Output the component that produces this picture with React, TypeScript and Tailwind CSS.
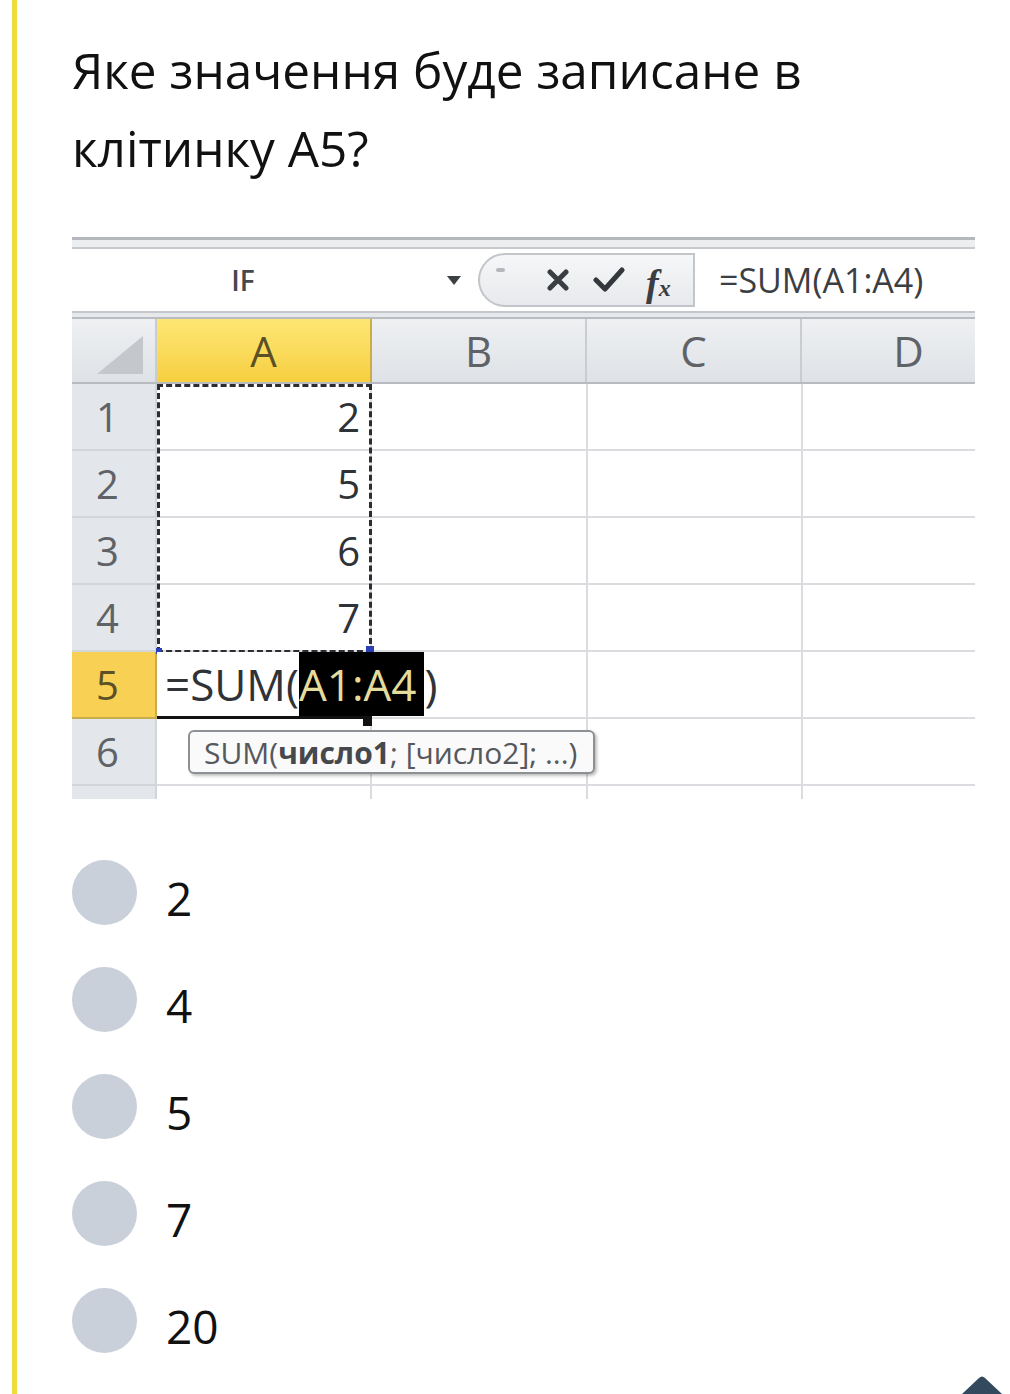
import type { ReactNode } from "react";

const answers = ["2", "4", "5", "7", "20"];

const rows: { n: string; value?: string }[] = [
  { n: "1", value: "2" },
  { n: "2", value: "5" },
  { n: "3", value: "6" },
  { n: "4", value: "7" },
  { n: "5" },
  { n: "6" }
];

function HeaderCell({ active, children }: { active?: boolean; children: ReactNode }) {
  return (
    <div
      className={
        active
          ? "flex h-full w-[215px] shrink-0 items-center justify-center border-r-2 border-[#c9ad4c] bg-gradient-to-b from-[#fde773] to-[#f7cf3f] text-[42px] text-[#5b5126]"
          : "flex h-full w-[215px] shrink-0 items-center justify-center border-r-2 border-[#c9ccd0] bg-gradient-to-b from-[#eef0f2] to-[#dfe2e6] text-[42px] text-[#5f6266]"
      }
    >
      {children}
    </div>
  );
}

function Sheet() {
  return (
    <div className="relative mt-[50px] h-[562px] w-[903px] overflow-hidden font-['Open_Sans',sans-serif]">
      {/* ribbon edge */}
      <div className="h-[12px] border-t-[3px] border-b-[2px] border-t-[#b4b7bb] border-b-[#c6c9cd] bg-[#eceef0]" />

      {/* formula bar */}
      <div className="flex h-[62px] items-center bg-white">
        <div className="flex h-full w-[406px] shrink-0 items-center">
          <span className="w-[342px] text-center text-[28px] font-semibold text-[#45484c]">IF</span>
          <svg className="ml-[33px]" width="14" height="9" viewBox="0 0 14 9">
            <path d="M0 0 H14 L7 9 Z" fill="#3c3f43" />
          </svg>
        </div>
        <div className="relative flex h-[54px] w-[217px] shrink-0 items-center rounded-l-[27px] border-y-2 border-l-2 border-r-2 border-[#c2c5c9] bg-gradient-to-b from-[#f6f7f8] to-[#e7e9ec]">
          <span className="absolute left-[16px] top-[13px] h-[4px] w-[9px] rounded-full bg-[#b5b8bc]" />
          <svg className="absolute left-[66px]" width="24" height="22" viewBox="0 0 24 22">
            <path d="M4 3 L20 19 M20 3 L4 19" stroke="#3a3d41" strokeWidth="5" strokeLinecap="round" />
          </svg>
          <svg className="absolute left-[113px]" width="32" height="26" viewBox="0 0 32 26">
            <path d="M3 13 L12 22 L29 3" stroke="#34373b" strokeWidth="5" fill="none" strokeLinecap="round" strokeLinejoin="round" />
          </svg>
          <span className="absolute left-[166px] top-[0px] font-['Liberation_Serif',serif] text-[38px] font-bold italic text-[#3a3d41]">
            f<span className="text-[24px]">x</span>
          </span>
        </div>
        <span className="pl-[24px] text-[34px] text-[#3b3e42]">=SUM(A1:A4)</span>
      </div>

      <div className="h-[8px] border-t-2 border-b-2 border-t-[#c3c6ca] border-b-[#b9bcc0] bg-[#e6e8eb]" />

      {/* column headers */}
      <div className="flex h-[65px] border-b-2 border-[#b8bbbf]">
        <div className="relative flex h-full w-[85px] shrink-0 items-end justify-end border-r-2 border-[#c9ccd0] bg-gradient-to-b from-[#eef0f2] to-[#dfe2e6] pb-[8px] pr-[12px]">
          <svg width="46" height="38" viewBox="0 0 46 38">
            <path d="M46 0 V38 H0 Z" fill="#c4c7cb" />
          </svg>
        </div>
        <HeaderCell active>A</HeaderCell>
        <HeaderCell>B</HeaderCell>
        <HeaderCell>C</HeaderCell>
        <HeaderCell>D</HeaderCell>
      </div>

      {/* rows */}
      {rows.map((row) => (
        <div key={row.n} className="flex h-[67px]">
          <div
            className={
              row.n === "5"
                ? "flex w-[85px] shrink-0 items-center border-r-2 border-b-2 border-[#c9ad4c] bg-[#f8d053] pl-[24px] text-[40px] text-[#5b5126]"
                : "flex w-[85px] shrink-0 items-center border-r-2 border-b-2 border-[#d2d5d9] bg-[#e3e6ea] pl-[24px] text-[40px] text-[#5f6266]"
            }
          >
            {row.n}
          </div>
          {row.n === "5" ? (
            <div className="relative z-10 flex w-[215px] shrink-0 items-center overflow-visible border-b-[3px] border-[#111] bg-white pl-[8px] text-[44px] whitespace-nowrap text-[#2f3236]">
              =SUM(
              <span className="flex h-[64px] items-center bg-black pr-[8px] text-[#e4dc9c]">A1:A4</span>)
            </div>
          ) : (
            <div className="flex w-[215px] shrink-0 items-center justify-end border-r-2 border-b-2 border-[#dadcdf] pr-[10px] text-[40px] text-[#2f3236]">
              {row.value}
            </div>
          )}
          <div className="w-[216px] shrink-0 border-r-2 border-b-2 border-[#dadcdf]" />
          <div className="w-[215px] shrink-0 border-r-2 border-b-2 border-[#dadcdf]" />
          <div className="w-[215px] shrink-0 border-b-2 border-[#dadcdf]" />
        </div>
      ))}
      <div className="flex h-[20px]">
        <div className="w-[85px] shrink-0 border-r-2 border-[#d2d5d9] bg-[#e3e6ea]" />
        <div className="w-[215px] shrink-0 border-r-2 border-[#dadcdf]" />
        <div className="w-[216px] shrink-0 border-r-2 border-[#dadcdf]" />
        <div className="w-[215px] shrink-0 border-r-2 border-[#dadcdf]" />
      </div>

      {/* copy range marquee */}
      <div className="absolute left-[85px] top-[147px] h-[269px] w-[215px] border-[3px] border-dashed border-[#2b2d30]" />
      <span className="absolute left-[84px] top-[411px] h-[6px] w-[6px] bg-[#2941b5]" />
      <span className="absolute left-[294px] top-[409px] h-[8px] w-[8px] bg-[#2941b5]" />
      <span className="absolute left-[291px] top-[480px] h-[9px] w-[9px] bg-[#111]" />

      {/* argument tooltip */}
      <div className="absolute left-[116px] top-[493px] z-20 flex h-[44px] w-[407px] items-center rounded-[6px] border-2 border-[#8d9094] bg-[#fafafa] pl-[14px] text-[30px] whitespace-nowrap text-[#55585c] shadow-[2px_2px_3px_rgba(0,0,0,0.25)]">
        SUM(<span className="font-bold text-[#45484c]">число1</span>; [число2]; ...)
      </div>
    </div>
  );
}

export default function App() {
  return (
    <div className="relative h-[1394px] overflow-hidden bg-white font-['Open_Sans',sans-serif]">
      <div className="ml-3 h-full border-l-[5px] border-[#eedd3c] pl-[55px]">
        <h1 className="max-w-[820px] pt-[31px] text-[49.5px] leading-[78px] font-normal text-[#111]">
          Яке значення буде записане в клітинку А5?
        </h1>

        <Sheet />

        <ul className="mt-[61px] flex flex-col gap-[42px]">
          {answers.map((answer) => (
            <li key={answer} className="flex items-center gap-[29px]">
              <span className="h-[65px] w-[65px] shrink-0 rounded-full bg-[#c9d0da]" />
              <span className="pt-[10px] text-[46px] leading-none text-[#111]">{answer}</span>
            </li>
          ))}
        </ul>
      </div>

      <svg className="absolute bottom-0 right-[8px]" width="40" height="18" viewBox="0 0 40 18">
        <path d="M0 18 L17 2 Q20 -1 23 2 L40 18 Z" fill="#33495d" />
      </svg>
    </div>
  );
}
